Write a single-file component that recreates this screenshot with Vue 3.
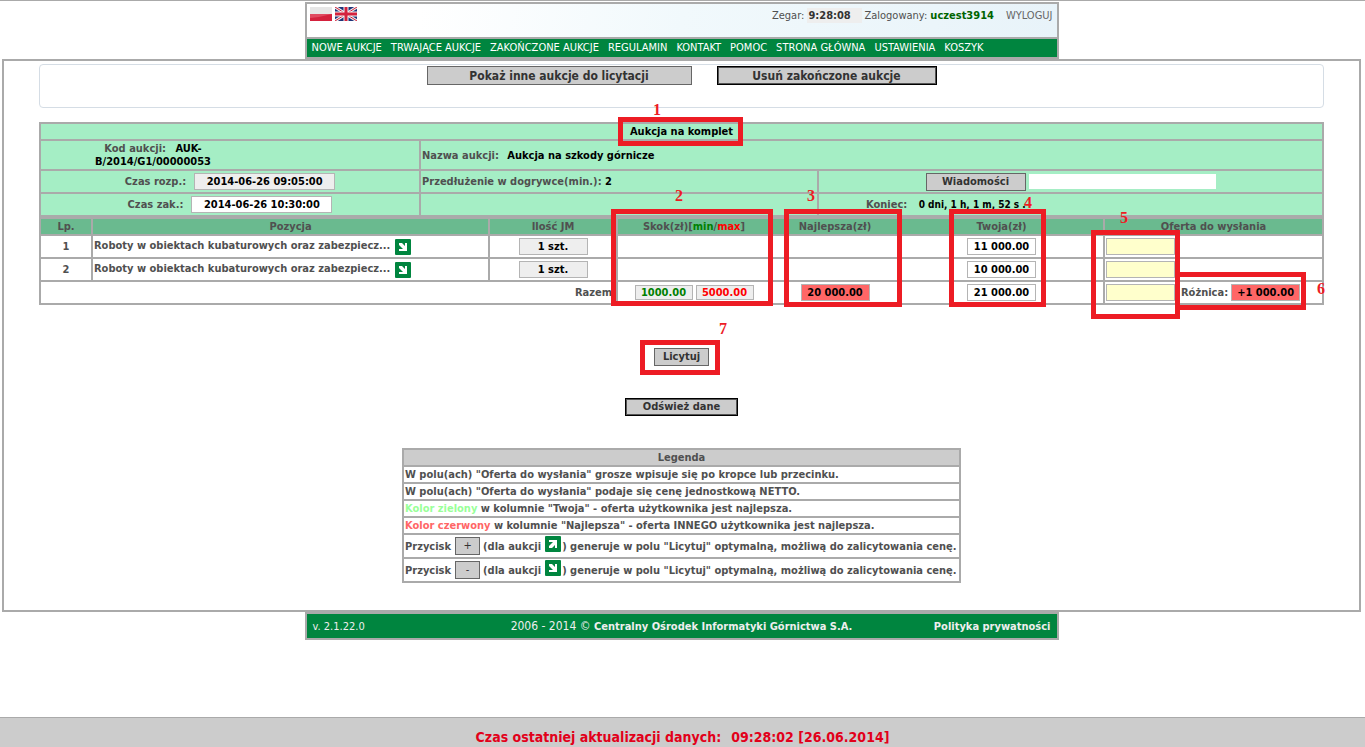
<script setup>
import { ref } from 'vue'

const nav = [
  'NOWE AUKCJE', 'TRWAJĄCE AUKCJE', 'ZAKOŃCZONE AUKCJE', 'REGULAMIN', 'KONTAKT',
  'POMOC', 'STRONA GŁÓWNA', 'USTAWIENIA', 'KOSZYK',
]

const items = ref([
  { lp: 1, name: 'Roboty w obiektach kubaturowych oraz zabezpiecz...', qty: '1 szt.', mine: '11 000.00', offer: '' },
  { lp: 2, name: 'Roboty w obiektach kubaturowych oraz zabezpiecz...', qty: '1 szt.', mine: '10 000.00', offer: '' },
])
const totalOffer = ref('')
const message = ref('')
const marks = [1, 2, 3, 4, 5, 6, 7]
</script>

<template>
  <div class="page">
    <header class="site-head">
      <div class="banner">
        <div class="flags">
          <a href="#" aria-label="Polski">
            <svg width="22" height="14" viewBox="0 0 22 14">
              <rect width="22" height="7" fill="#e6e6e6" />
              <rect y="7" width="22" height="7" fill="#d4213d" />
              <path d="M0 11q11-1 22-4H0z" fill="#e04a60" />
            </svg>
          </a>
          <a href="#" aria-label="English">
            <svg width="22" height="14" viewBox="0 0 22 14">
              <rect width="22" height="14" fill="#1f3479" />
              <path d="M0 0l22 14M22 0L0 14" stroke="#eee" stroke-width="3" />
              <path d="M0 0l22 14M22 0L0 14" stroke="#d4213d" stroke-width="1" />
              <path d="M11 0v14M0 7h22" stroke="#f2f2f2" stroke-width="5" />
              <path d="M11 0v14M0 7h22" stroke="#d4213d" stroke-width="3" />
            </svg>
          </a>
        </div>
        <div class="session">
          <label for="clock">Zegar:</label>
          <input id="clock" class="clock" value="9:28:08" readonly />
          <span>Zalogowany: <b class="user">uczest3914</b></span>
          <a href="#" class="logout">WYLOGUJ</a>
        </div>
      </div>
      <nav class="nav">
        <a v-for="n in nav" :key="n" href="#">{{ n }}</a>
      </nav>
    </header>

    <main class="main">
      <div class="toolbar">
        <button type="button" class="btn big wide">Pokaż inne aukcje do licytacji</button>
        <button type="button" class="btn big focus mid">Usuń zakończone aukcje</button>
      </div>

      <table class="grid info">
        <colgroup><col class="i1" /><col class="i2" /><col class="i3" /></colgroup>
        <tbody>
          <tr class="r17"><td colspan="3" class="c val">Aukcja na komplet</td></tr>
          <tr class="r30">
            <td><div class="code">Kod aukcji: <span class="val code-val">AUK-<br />B/2014/G1/00000053</span></div></td>
            <td colspan="2">Nazwa aukcji: <span class="val gap">Aukcja na szkody górnicze</span></td>
          </tr>
          <tr class="r23">
            <td>
              <div class="line"><label for="start">Czas rozp.:</label><input id="start" class="field date" value="2014-06-26 09:05:00" readonly /></div>
            </td>
            <td>Przedłużenie w dogrywce(min.): <span class="val">2</span></td>
            <td>
              <div class="line tight">
                <button type="button" class="btn news">Wiadomości</button>
                <input v-model="message" class="plain" aria-label="Wiadomości" />
              </div>
            </td>
          </tr>
          <tr class="r23">
            <td>
              <div class="line"><label for="end">Czas zak.:</label><input id="end" class="field date white" value="2014-06-26 10:30:00" readonly /></div>
            </td>
            <td></td>
            <td><div class="remain">Koniec: <span class="val small">0 dni, 1 h, 1 m, 52 s .</span></div></td>
          </tr>
        </tbody>
      </table>

      <table class="grid lots">
        <colgroup>
          <col class="c1" /><col class="c2" /><col class="c3" /><col class="c4" /><col class="c5" /><col class="c6" /><col class="c7" />
        </colgroup>
        <thead>
          <tr class="r17">
            <th>Lp.</th>
            <th>Pozycja</th>
            <th>Ilość JM</th>
            <th>Skok(zł)[<span class="min">min</span>/<span class="max">max</span>]</th>
            <th>Najlepsza(zł)</th>
            <th>Twoja(zł)</th>
            <th>Oferta do wysłania</th>
          </tr>
        </thead>
        <tbody>
          <tr v-for="it in items" :key="it.lp" class="r23">
            <td class="c">{{ it.lp }}</td>
            <td>
              <div class="name">
                <span>{{ it.name }}</span>
                <svg width="16" height="16" viewBox="0 0 16 16" class="arrow">
                  <rect width="16" height="16" rx="1" fill="#00853f" />
                  <path d="M4 4h3l3 3V4h2v8H4v-2h4L4 6z" fill="#fff" />
                </svg>
              </div>
            </td>
            <td class="c"><input class="field" :value="it.qty" readonly aria-label="Ilość JM" /></td>
            <td></td>
            <td></td>
            <td class="c"><input class="field white" :value="it.mine" readonly aria-label="Twoja(zł)" /></td>
            <td><input v-model="it.offer" class="field offer" aria-label="Oferta do wysłania" /></td>
          </tr>
          <tr class="r23">
            <td colspan="3" class="total">Razem</td>
            <td>
              <div class="line tight">
                <input class="field step min" value="1000.00" readonly aria-label="Skok min" />
                <input class="field step max" value="5000.00" readonly aria-label="Skok max" />
              </div>
            </td>
            <td class="c"><input class="field red" value="20 000.00" readonly aria-label="Najlepsza(zł)" /></td>
            <td class="c"><input class="field white" value="21 000.00" readonly aria-label="Twoja(zł)" /></td>
            <td>
              <div class="offer-line">
                <input v-model="totalOffer" class="field offer" aria-label="Oferta razem" />
                <label for="diff">Różnica:</label>
                <input id="diff" class="field red" value="+1 000.00" readonly />
              </div>
            </td>
          </tr>
        </tbody>
      </table>

      <div class="actions">
        <button type="button" class="btn bid">Licytuj</button>
        <button type="button" class="btn focus refresh">Odśwież dane</button>
      </div>

      <table class="grid legend">
        <thead><tr class="r17"><th>Legenda</th></tr></thead>
        <tbody>
          <tr class="r17"><td>W polu(ach) "Oferta do wysłania" grosze wpisuje się po kropce lub przecinku.</td></tr>
          <tr class="r17"><td>W polu(ach) "Oferta do wysłania" podaje się cenę jednostkową NETTO.</td></tr>
          <tr class="r17"><td><span class="lime">Kolor zielony</span> w kolumnie "Twoja" - oferta użytkownika jest najlepsza.</td></tr>
          <tr class="r17"><td><span class="rose">Kolor czerwony</span> w kolumnie "Najlepsza" - oferta INNEGO użytkownika jest najlepsza.</td></tr>
          <tr class="r24">
            <td>
              <div class="hint">
                <span>Przycisk</span><button type="button" class="btn sign">+</button><span>(dla aukcji</span>
                <svg width="16" height="16" viewBox="0 0 16 16" class="arrow">
                  <rect width="16" height="16" rx="1" fill="#00853f" />
                  <path d="M4 12h3l3-3v3h2V4H4v2h4l-4 4z" fill="#fff" />
                </svg>
                <span>) generuje w polu "Licytuj" optymalną, możliwą do zalicytowania cenę.</span>
              </div>
            </td>
          </tr>
          <tr class="r24">
            <td>
              <div class="hint">
                <span>Przycisk</span><button type="button" class="btn sign">-</button><span>(dla aukcji</span>
                <svg width="16" height="16" viewBox="0 0 16 16" class="arrow">
                  <rect width="16" height="16" rx="1" fill="#00853f" />
                  <path d="M4 4h3l3 3V4h2v8H4v-2h4L4 6z" fill="#fff" />
                </svg>
                <span>) generuje w polu "Licytuj" optymalną, możliwą do zalicytowania cenę.</span>
              </div>
            </td>
          </tr>
        </tbody>
      </table>
    </main>

    <footer class="site-foot">
      <span class="version">v. 2.1.22.0</span>
      <span class="copy"><span class="years">2006 - 2014 ©</span> <b>Centralny Ośrodek Informatyki Górnictwa S.A.</b></span>
      <a href="#" class="privacy">Polityka prywatności</a>
    </footer>

    <div class="status"><span>Czas ostatniej aktualizacji danych:</span><span>09:28:02 [26.06.2014]</span></div>

    <template v-for="m in marks" :key="m">
      <div class="frame" :class="'f' + m"></div>
      <span class="num" :class="'n' + m">{{ m }}</span>
    </template>
  </div>
</template>

<style>
body { background: #fff; }
</style>

<style scoped>
.page {
  position: relative;
  box-sizing: border-box;
  min-height: 100vh;
  padding: 1px 4px 30px 2px;
  border-top: 1px solid #aaa;
  font: bold 11px/13px "DejaVu Sans Condensed", "Noto Sans", sans-serif;
  color: #505050;
}
a { color: inherit; text-decoration: none; }
input, button { font: inherit; margin: 0; box-sizing: border-box; }

.site-head, .site-foot {
  box-sizing: border-box;
  width: 754px;
  max-width: 100%;
  margin: 0 auto;
  border: 2px solid #aaa;
}
.banner {
  display: flex;
  justify-content: space-between;
  height: 33px;
  border-bottom: 2px solid #aaa;
  background: linear-gradient(100deg, #fff 15%, #f1f9fc 50%, #e8f3f9);
}
.flags { display: flex; gap: 3px; padding: 3px; }
.flags svg { display: block; }
.session { display: flex; align-items: center; height: 22px; font-weight: normal; padding-right: 4px; }
.clock { width: 55px; height: 15px; padding: 0 1px; margin: 0 2px 0 3px; border: 0; background: #eee; font-weight: bold; color: #333; }
.user { color: #006400; }
.logout { margin-left: 12px; color: #666; }
.nav {
  display: flex;
  gap: 9px;
  height: 18px;
  padding-left: 5px;
  background: #00853f;
  color: #fff;
  font-weight: normal;
  line-height: 18px;
  white-space: nowrap;
}

.main {
  border: 2px solid #aaa;
  padding: 3px 35px 27px;
}
.toolbar {
  display: flex;
  justify-content: center;
  align-items: flex-start;
  gap: 25px;
  box-sizing: border-box;
  height: 44px;
  padding-top: 1px;
  border: 1px solid #d5dde5;
  border-radius: 4px;
}
.btn {
  height: 18px;
  padding: 0;
  border: 1px solid #666;
  border-radius: 0;
  background: #ccc;
  color: #333;
  line-height: 14px;
}
.btn.focus { border-color: #555; outline: 1px solid #000; outline-offset: 0; height: 16px; margin: 1px; }
.big { height: 19px; font-size: 12px; }
.btn.big.focus { height: 17px; }
.wide { width: 265px; }
.mid { width: 218px; }
.news { width: 100px; }
.bid { width: 55px; }
.refresh { width: 111px; }

.grid { width: 100%; border-collapse: collapse; table-layout: fixed; }
.grid td, .grid th { padding: 0 1px; border: 2px solid #aaa; }
.r17 { height: 17px; }
.r23 { height: 23px; }
.r24 { height: 24px; }
.r30 { height: 30px; }
.info { margin-top: 14px; background: #a5eec5; }
.i1 { width: 380px; }
.i2 { width: 398px; }
.i3 { width: 505px; }
.c1 { width: 52px; }
.c2 { width: 397px; }
.c3 { width: 128px; }
.c4 { width: 154px; }
.c5 { width: 128px; }
.c6 { width: 205px; }
.c7 { width: 219px; }
.lots th { background: #6aba8f; }
.c { text-align: center; }
.val { color: #000; }
.gap { margin-left: 5px; }
.code { width: 222px; text-align: center; }
.code-val { margin-left: 6px; }
.line { display: flex; justify-content: center; align-items: center; gap: 8px; }
.line.tight { gap: 3px; }
.remain { padding-left: 46px; }
.small { font-size: 10px; margin-left: 8px; }
.field {
  display: inline-block;
  vertical-align: middle;
  width: 69px;
  height: 17px;
  padding: 0;
  border: 1px solid #b4b4b4;
  background: #eee;
  color: #000;
  text-align: center;
}
.date { width: 141px; }
.white { background: #fff; }
.offer { background: #ffffcc; }
.red { background: #ff6666; }
.step { width: 58px; height: 15px; }
.min { color: #008000; }
.max { color: #f00; }
.plain { width: 187px; height: 15px; padding: 0; border: 0; background: #fff; }
.name { display: flex; gap: 5px; white-space: nowrap; }
.arrow { flex: none; }
.grid .total { text-align: right; padding-right: 4px; }
.offer-line { display: flex; align-items: center; gap: 3px; white-space: nowrap; }
.offer-line label { margin-left: 3px; }

.actions { display: flex; flex-direction: column; align-items: center; gap: 32px; margin-top: 43px; }
.legend { width: 559px; margin: 32px auto 0; white-space: nowrap; }
.legend th { background: #ccc; }
.lime { color: #99ff99; }
.rose { color: #ff6666; }
.hint { display: flex; align-items: center; }
.hint .arrow { margin: 0 1px 4px 4px; }
.sign { width: 25px; margin: 0 3px 0 4px; font-weight: normal; }

.site-foot {
  display: grid;
  grid-template-columns: 1fr auto 1fr;
  align-items: center;
  height: 28px;
  padding: 0 6px;
  background: #00853f;
  color: #eee;
}
.version, .years { font-weight: normal; }
.years { font-size: 12px; }
.privacy { text-align: right; }

.status {
  position: fixed;
  left: 0;
  right: 0;
  bottom: 0;
  display: flex;
  justify-content: center;
  gap: 10px;
  box-sizing: border-box;
  height: 30px;
  padding-top: 10px;
  border-top: 1px solid #aaa;
  background: #ccc;
  color: #e2001a;
  font-size: 14px;
  line-height: 18px;
}

.frame { position: absolute; box-sizing: border-box; border: 5px solid #ed1c24; pointer-events: none; }
.f1 { left: 618px; top: 116px; width: 125px; height: 29px; }
.f2 { left: 611px; top: 208px; width: 162px; height: 97px; }
.f3 { left: 784px; top: 208px; width: 118px; height: 98px; }
.f4 { left: 949px; top: 208px; width: 97px; height: 98px; }
.f5 { left: 1091px; top: 229px; width: 89px; height: 89px; }
.f6 { left: 1175px; top: 271px; width: 131px; height: 38px; }
.f7 { left: 640px; top: 339px; width: 80px; height: 35px; }
.num { position: absolute; color: #ed1c24; font: bold 16px/16px "Liberation Serif", serif; }
.n1 { left: 653px; top: 101px; }
.n2 { left: 675px; top: 187px; }
.n3 { left: 807px; top: 187px; }
.n4 { left: 1024px; top: 194px; }
.n5 { left: 1120px; top: 209px; }
.n6 { left: 1317px; top: 280px; }
.n7 { left: 719px; top: 320px; }
</style>
